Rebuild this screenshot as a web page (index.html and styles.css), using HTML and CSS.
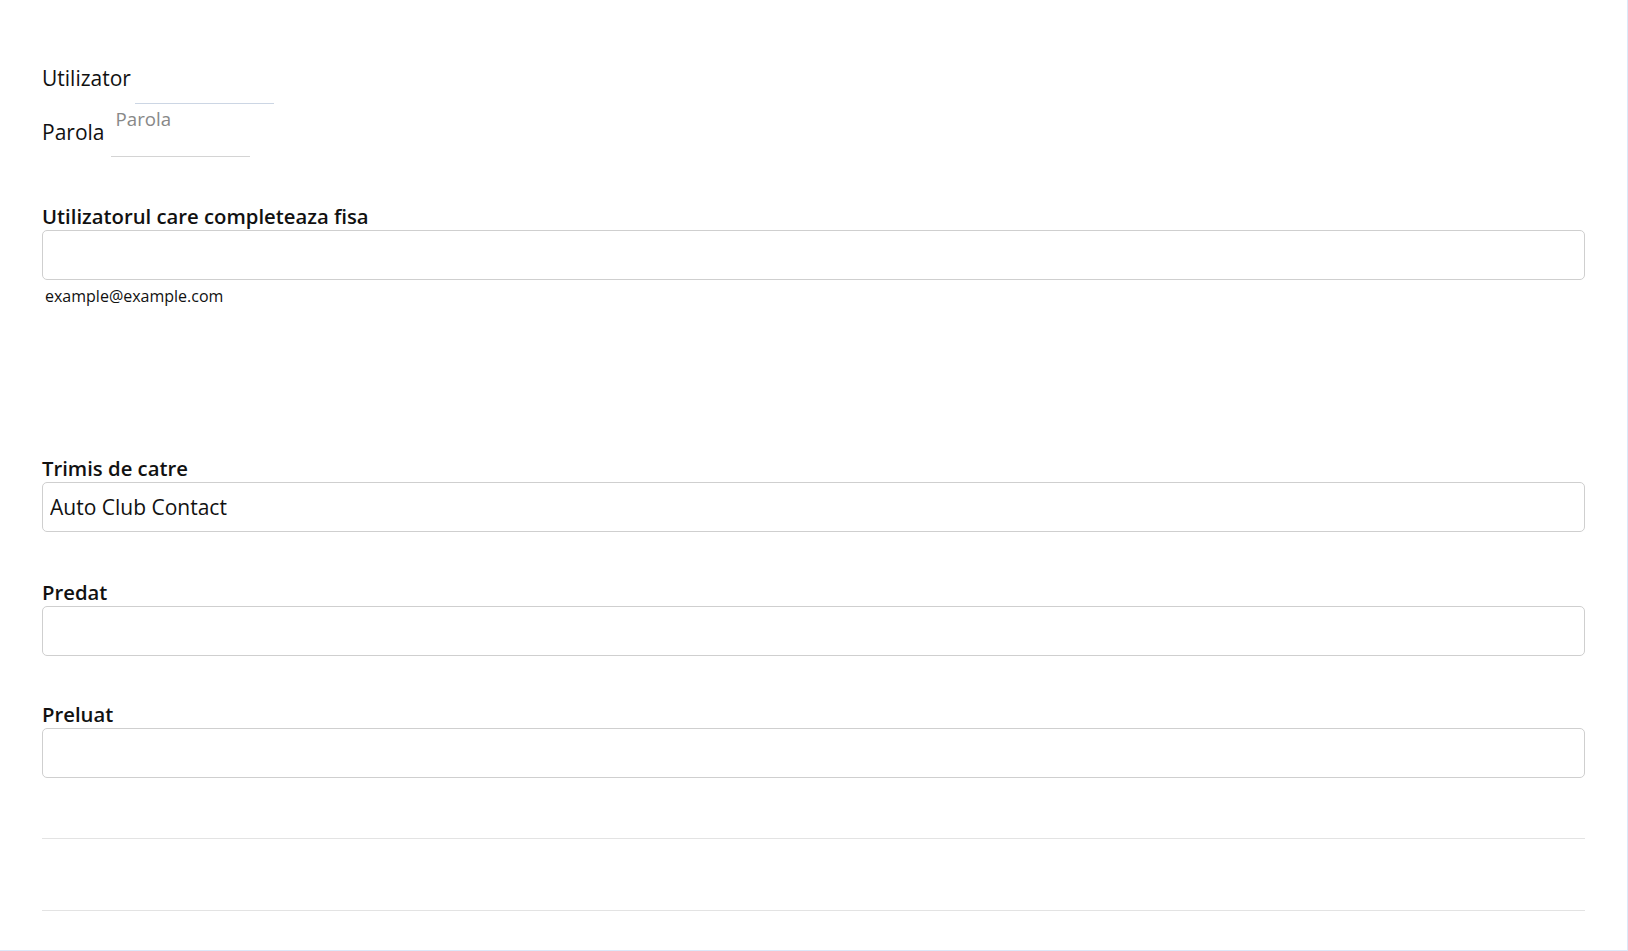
FILE: index.html
```html
<!DOCTYPE html>
<html lang="ro">
<head>
<meta charset="utf-8">
<title>Formular</title>
<link rel="stylesheet" href="styles.css">
</head>
<body>
<div class="page">
  <div class="login">
    <div class="login-row row-user">
      <label class="login-label user-label" for="u">Utilizator</label>
      <input class="login-input user-input" id="u" type="text">
    </div>
    <div class="login-row row-pass">
      <label class="login-label pass-label" for="p">Parola</label>
      <input class="login-input pass-input" id="p" type="password" placeholder="Parola">
    </div>
  </div>

  <div class="field field-first">
    <label class="field-label" for="f1">Utilizatorul care completeaza fisa</label>
    <input class="field-input" id="f1" type="text">
    <div class="hint">example@example.com</div>
  </div>

  <div class="field field-sent">
    <label class="field-label" for="f2">Trimis de catre</label>
    <input class="field-input" id="f2" type="text" value="Auto Club Contact">
  </div>

  <div class="field field-given">
    <label class="field-label" for="f3">Predat</label>
    <input class="field-input" id="f3" type="text">
  </div>

  <div class="field field-taken">
    <label class="field-label" for="f4">Preluat</label>
    <input class="field-input" id="f4" type="text">
  </div>

  <hr class="sep sep-1">
  <hr class="sep sep-2">
</div>
</body>
</html>
```

FILE: styles.css
```css
* { box-sizing: border-box; }
html, body { margin: 0; padding: 0; background: #fff; }
body {
  font-family: "Open Sans", "Noto Sans", sans-serif;
  color: #111;
}
.page {
  width: 1628px;
  height: 951px;
  border-right: 1px solid #dce8f8;
  border-bottom: 1px solid #dce8f8;
  padding: 69px 42px 0 42px;
  overflow: hidden;
}
.login-row {
  display: flex;
  align-items: flex-start;
}
.login-label {
  font-size: 21px;
  line-height: 24px;
}
.user-label { margin-top: -3px; }
.login-input {
  font-family: inherit;
  border: 0;
  outline: 0;
  background: transparent;
  width: 139px;
  padding: 0 5px;
  margin: 0;
}
.row-user .login-input {
  margin-left: 4px;
  height: 35px;
  border-bottom: 1px solid #ccd6e4;
}
.pass-label { margin-top: 16px; }
.row-pass .login-input {
  margin-left: 6px;
  height: 53px;
  padding: 4px 5px 28px 5px;
  border-bottom: 1px solid #d4d4d4;
  font-size: 18.7px;
}
.pass-input::placeholder { color: #888; }

.field { display: flex; flex-direction: column; }
.field-first { margin-top: 47px; }
.field-sent { margin-top: 150px; }
.field-given { margin-top: 48px; }
.field-taken { margin-top: 46px; }
.field-label {
  font-size: 20.3px;
  line-height: 24px;
  font-weight: 600;
  margin-bottom: 2px;
}
.field-input {
  width: 100%;
  height: 50px;
  border: 1px solid #cfcfcf;
  border-radius: 5px;
  font-family: inherit;
  font-size: 21px;
  padding: 0 7px;
  color: #111;
  outline: 0;
  margin: 0;
}
.hint {
  font-size: 16px;
  line-height: 20px;
  margin-top: 6px;
  padding-left: 3px;
}
.sep {
  border: 0;
  border-top: 1px solid #e3e3e3;
  margin: 0;
}
.sep-1 { margin-top: 60px; }
.sep-2 { margin-top: 71px; }
```
